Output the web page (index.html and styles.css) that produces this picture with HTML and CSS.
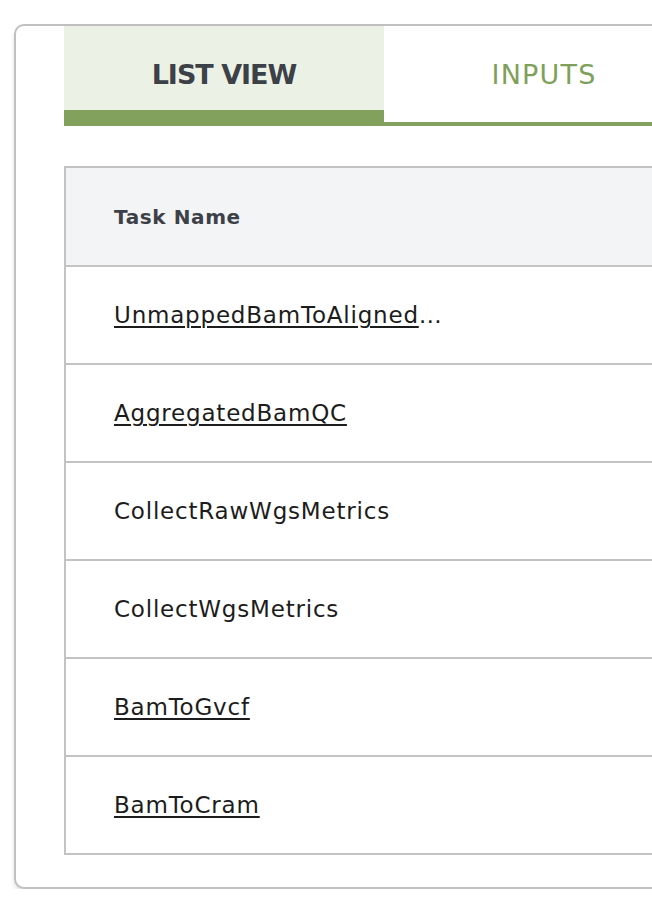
FILE: index.html
```html
<!DOCTYPE html>
<html lang="en">
<head>
<meta charset="utf-8">
<title>Task list</title>
<link rel="stylesheet" href="styles.css">
</head>
<body>
<div class="card">
  <div class="tabs">
    <div class="tab tab-active">LIST VIEW</div>
    <div class="tab">INPUTS</div>
  </div>
  <div class="table">
    <div class="row row-head"><div class="cell cell-head">Task Name</div></div>
    <div class="row"><div class="cell"><a class="link" href="#">UnmappedBamToAlignedBam</a></div></div>
    <div class="row"><div class="cell"><a class="link" href="#">AggregatedBamQC</a></div></div>
    <div class="row"><div class="cell">CollectRawWgsMetrics</div></div>
    <div class="row"><div class="cell">CollectWgsMetrics</div></div>
    <div class="row"><div class="cell"><a class="link" href="#">BamToGvcf</a></div></div>
    <div class="row"><div class="cell"><a class="link" href="#">BamToCram</a></div></div>
  </div>
</div>
</body>
</html>
```
FILE: styles.css
```css
html, body {
  margin: 0;
  padding: 0;
  background: #ffffff;
  overflow: hidden;
}
body {
  font-family: "DejaVu Sans", "Noto Sans", sans-serif;
  color: #1c1c1c;
}
.card {
  margin: 24px 0 0 14px;
  width: 720px;
  border: 2px solid #c0c0c0;
  border-radius: 10px;
  padding: 0 0 32px 48px;
  box-shadow: 0 3px 4px rgba(0, 0, 0, 0.12);
  background: #fff;
}
.tabs {
  display: flex;
  border-bottom: 4px solid #82a15c;
}
.tab {
  width: 320px;
  height: 96px;
  display: flex;
  align-items: center;
  justify-content: center;
  font-size: 27px;
  color: #7fa05a;
  letter-spacing: 1.2px;
}
.tab-active {
  background: #ebf1e5;
  color: #3c4047;
  font-weight: bold;
  box-shadow: inset 0 -12px 0 #82a15c;
  letter-spacing: -1px;
}
.table {
  margin-top: 40px;
  border: 2px solid #c3c3c3;
  border-right: none;
}
.row {
  height: 96px;
  display: flex;
  align-items: center;
  border-top: 2px solid #c3c3c3;
}
.row:first-child {
  border-top: none;
}
.row-head {
  background: #f3f4f6;
  height: 97px;
}
.cell {
  padding-left: 48px;
  width: 334px;
  font-size: 23px;
  letter-spacing: 0.8px;
  white-space: nowrap;
  overflow: hidden;
  text-overflow: ellipsis;
}
.cell-head {
  font-weight: bold;
  font-size: 20px;
  letter-spacing: 0.6px;
  color: #3c4047;
}
.link {
  color: #1c1c1c;
  text-decoration: underline;
  text-decoration-thickness: 2px;
  text-underline-offset: 3px;
}
```
